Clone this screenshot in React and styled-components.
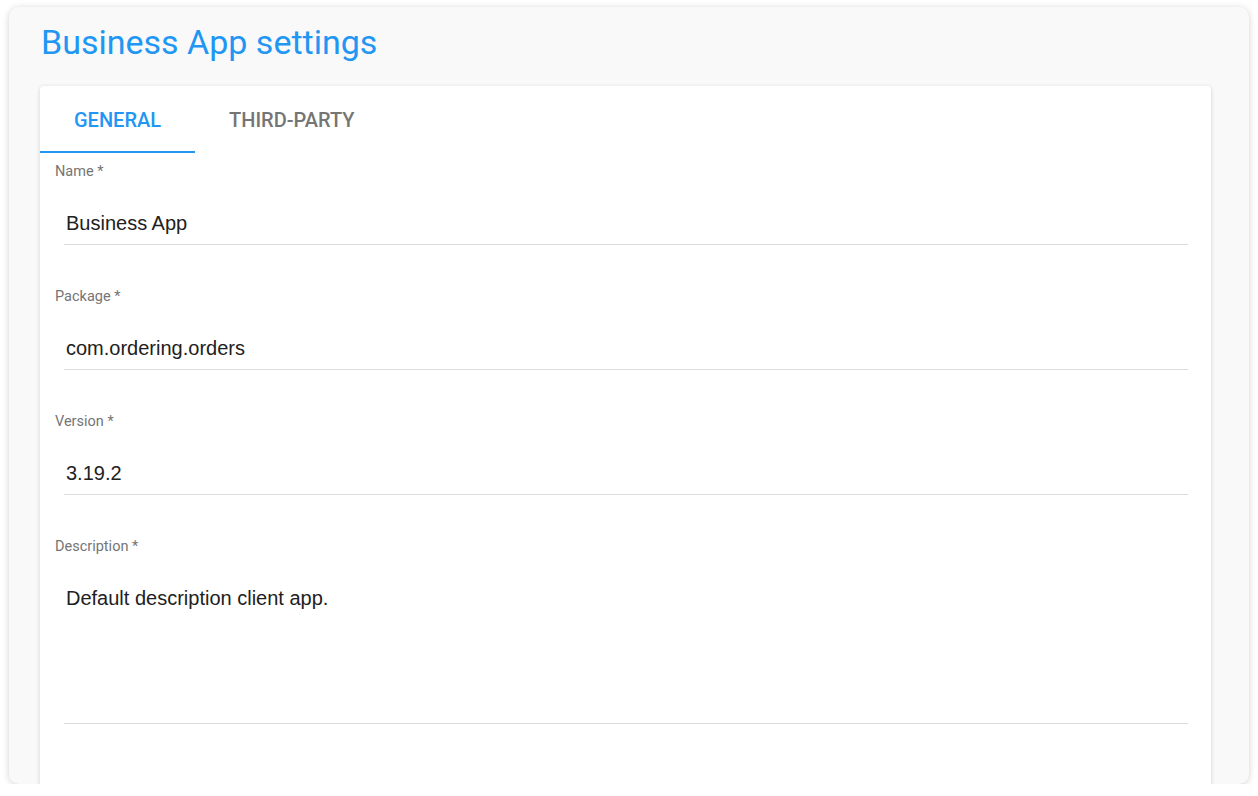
import React from 'react';
import styled, { createGlobalStyle } from 'styled-components';

const GlobalStyle = createGlobalStyle`
  html, body {
    margin: 0;
    padding: 0;
    background: #ffffff;
    font-family: Roboto, "Liberation Sans", Arial, sans-serif;
  }
  * {
    box-sizing: border-box;
  }
`;

const Frame = styled.div`
  margin: 7px 9px 0;
  height: 777px;
  border-radius: 10px;
  background: #f9f9f9;
  box-shadow: 0 1px 7px rgba(0, 0, 0, 0.18);
  overflow: hidden;
  padding: 15px 38px 0 31px;
`;

const Title = styled.h1`
  margin: 0 0 24px 0;
  padding-left: 1px;
  font-family: Roboto, sans-serif;
  font-weight: 400;
  font-size: 34px;
  line-height: 40px;
  color: #2196f3;
`;

const Card = styled.div`
  background: #ffffff;
  border-radius: 4px;
  box-shadow: 0 1px 4px rgba(0, 0, 0, 0.16);
  min-height: 760px;
`;

const TabBar = styled.div`
  display: flex;
  height: 67px;
`;

const Tab = styled.button`
  border: none;
  background: transparent;
  padding: 2px 34px 0;
  height: 100%;
  font-family: Roboto, sans-serif;
  font-weight: 500;
  font-size: 20px;
  text-transform: uppercase;
  color: ${(p) => (p.$active ? '#2196f3' : '#757575')};
  border-bottom: 2px solid ${(p) => (p.$active ? '#2196f3' : 'transparent')};
  cursor: pointer;
`;

const Form = styled.div`
  padding: 8px 23px 0 15px;
`;

const Field = styled.div`
  display: flex;
  flex-direction: column;
  margin-bottom: 41px;
`;

const Label = styled.label`
  font-family: Roboto, sans-serif;
  font-size: 14.5px;
  line-height: 20px;
  color: #757575;
  margin: 1px 0 18px;
`;

const Input = styled.input`
  margin-left: 9px;
  border: none;
  border-bottom: 1px solid #dcdcdc;
  outline: none;
  background: transparent;
  height: 45px;
  padding: 3px 2px 0;
  font-family: "Liberation Sans", Arial, sans-serif;
  font-size: 20px;
  color: #212121;
`;

const TextArea = styled.textarea`
  margin-left: 9px;
  border: none;
  border-bottom: 1px solid #dcdcdc;
  outline: none;
  resize: none;
  background: transparent;
  height: 149px;
  padding: 11px 2px 0;
  font-family: "Liberation Sans", Arial, sans-serif;
  font-size: 20px;
  line-height: 24px;
  color: #212121;
`;

const fields = [
  { label: 'Name', value: 'Business App' },
  { label: 'Package', value: 'com.ordering.orders' },
  { label: 'Version', value: '3.19.2' },
];

const App = () => {
  return (
    <>
      <GlobalStyle />
      <Frame>
        <Title>Business App settings</Title>
        <Card>
          <TabBar>
            <Tab $active>General</Tab>
            <Tab>Third-party</Tab>
          </TabBar>
          <Form>
            {fields.map((f) => (
              <Field key={f.label}>
                <Label>{f.label} *</Label>
                <Input defaultValue={f.value} />
              </Field>
            ))}
            <Field>
              <Label>Description *</Label>
              <TextArea defaultValue="Default description client app." />
            </Field>
          </Form>
        </Card>
      </Frame>
    </>
  );
};

export default App;
